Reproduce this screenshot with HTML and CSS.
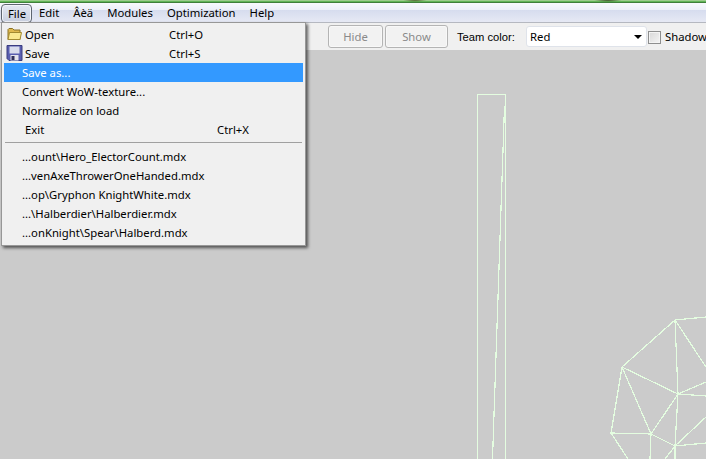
FILE: index.html
```html
<!DOCTYPE html>
<html lang="en">
<head>
<meta charset="utf-8">
<title>Model Editor</title>
<link rel="stylesheet" href="styles.css">
</head>
<body>
<div class="app">
  <div class="title-strip"></div>
  <nav class="menubar">
    <span class="menu-top active">File</span>
    <span class="menu-top">Edit</span>
    <span class="menu-top">Âèä</span>
    <span class="menu-top">Modules</span>
    <span class="menu-top">Optimization</span>
    <span class="menu-top">Help</span>
  </nav>
  <div class="toolbar">
    <button class="btn btn-hide" disabled>Hide</button>
    <button class="btn btn-show" disabled>Show</button>
    <span class="team-label">Team color:</span>
    <div class="select"><span>Red</span><i class="arrow"></i></div>
    <span class="check"></span>
    <span class="shadows">Shadows</span>
  </div>
  <main class="canvas">
    <svg class="mesh" width="706" height="409" viewBox="0 50 706 409" fill="none" stroke="#e4fde0" stroke-width="1.2" shape-rendering="crispEdges">
      <path d="M477.5 459V94.500H505.500V459"/>
      <path d="M504.500 106L492.500 459"/>
      <path d="M675 320L622 367L678 394L675 320M622 367L611 433L651 434L622 367M651 434L678 394L675 446L651 434"/>
      <path d="M611 433L628 459M651 434L650 459M675 446L665 459M675 446L675 459M675 446L706 443M675 446L706 417M678 394L706 396M678 394L706 382M675 320L706 317M675 320L706 367"/>
    </svg>
  </main>
  <div class="dropdown">
    <div class="item"><svg class="icon" viewBox="0 0 16 16"><path d="M1.500 13.500V3.500L2.500 2.500H6L7.500 4H13.500V13.500Z" fill="#e0b94e" stroke="#8a7326"/><path d="M1.500 13.500L3 6.500H15L13.500 13.500Z" fill="#fbe98f" stroke="#a38a30"/></svg><span class="label">Open</span><span class="key">Ctrl+O</span></div>
    <div class="item"><svg class="icon" viewBox="0 0 16 16"><path d="M0.500 0.500H15.500V15.500H2.500L0.500 13.500Z" fill="#5a5fb0" stroke="#3a3d80"/><rect x="3" y="1.500" width="10" height="7" fill="#d8dcec"/><rect x="4" y="10" width="8" height="5.500" fill="#e4e4ec"/><rect x="5" y="11" width="3" height="4" fill="#30305a"/></svg><span class="label">Save</span><span class="key">Ctrl+S</span></div>
    <div class="item plain selected"><span>Save as...</span></div>
    <div class="item plain"><span>Convert WoW-texture...</span></div>
    <div class="item plain"><span>Normalize on load</span></div>
    <div class="item exit"><span class="label">Exit</span><span class="key">Ctrl+X</span></div>
    <div class="sep"></div>
    <div class="item plain"><span>...ount\Hero_ElectorCount.mdx</span></div>
    <div class="item plain"><span>...venAxeThrowerOneHanded.mdx</span></div>
    <div class="item plain"><span>...op\Gryphon KnightWhite.mdx</span></div>
    <div class="item plain"><span>...\Halberdier\Halberdier.mdx</span></div>
    <div class="item plain"><span>...onKnight\Spear\Halberd.mdx</span></div>
  </div>
</div>
</body>
</html>
```
FILE: styles.css
```css
* { box-sizing: border-box; }
html, body { margin: 0; padding: 0; }
body {
  font-family: "Noto Sans", "Liberation Sans", sans-serif;
  font-size: 11.3px;
  color: #000;
}
.app {
  position: relative;
  width: 706px;
  height: 459px;
  overflow: hidden;
  display: flex;
  flex-direction: column;
  background: #f0f0f0;
}
.title-strip {
  height: 3px;
  flex: none;
  background:
    radial-gradient(ellipse 12px 2px at 415px 0, #4a5a2a 0, transparent 100%),
    radial-gradient(ellipse 14px 2px at 608px 0, #33451f 0, transparent 100%),
    linear-gradient(#9ccb8c 0, #9ccb8c 1px, #62b558 1px, #62b558 2px, #3f7f3a 2px, #3f7f3a 3px);
}
.menubar {
  height: 20px;
  flex: none;
  display: flex;
  align-items: flex-start;
  padding: 1px 0 0 1px;
  background: linear-gradient(#f8f9fd 0, #eceff8 7px, #d6dcee 7px, #e6e9f4 19px);
  border-bottom: 1px solid #b5b8c0;
}
.menu-top { margin-left: 7px; margin-right: 7px; line-height: 18px; }
.menu-top.active {
  width: 31px;
  height: 19px;
  margin: 0;
  padding: 0 0 0 6px;
  line-height: 17px;
  border: 1px solid #5e6570;
  border-radius: 4px;
  background: linear-gradient(#e3e7f2, #c8cfdf);
  box-shadow: inset 0 0 0 1px #f2f4fa;
}
.toolbar {
  height: 27px;
  flex: none;
  display: flex;
  align-items: center;
  background: #f0f0f0;
  padding-left: 328px;
}
.toolbar > * { flex: none; }
.btn {
  height: 23px;
  margin: 0;
  padding: 0;
  font: inherit;
  color: #8a8a8a;
  background: #f2f2f2;
  border: 1px solid #b4b4b4;
  border-radius: 3px;
  box-shadow: inset 0 0 0 1px #f8f8f8;
}
.btn-hide { width: 55px; margin-right: 2px; }
.btn-show { width: 63px; }
.team-label {
  margin-left: 9px;
  width: 69px;
  font-family: "Liberation Sans", sans-serif;
  font-size: 11.2px;
}
.select {
  width: 121px;
  height: 21px;
  margin-right: 1px;
  padding: 0 0 0 3px;
  display: flex;
  align-items: center;
  justify-content: space-between;
  background: #fff;
  border: 1px solid #dfe3ea;
  border-radius: 3px;
}
.arrow {
  width: 0;
  height: 0;
  margin-right: 4px;
  border: 4px solid transparent;
  border-top: 4px solid #000;
  border-bottom: 0;
}
.check {
  width: 13px;
  height: 13px;
  margin: 1px 4px 0 0;
  border: 1px solid #8e8f8f;
  background: linear-gradient(135deg, #d8d8d8, #f4f4f4);
  box-shadow: inset 0 0 0 1px #f4f4f4;
}
.shadows { white-space: nowrap; }
.canvas { flex: 1; background: #cbcbcb; }
.mesh { display: block; }
.dropdown {
  position: absolute;
  left: 1px;
  top: 22px;
  width: 305px;
  height: 224px;
  padding: 2px;
  background: #f0f0f0;
  border: 1px solid #979797;
  box-shadow: 2px 2px 3px rgba(0, 0, 0, .6);
}
.item {
  height: 19px;
  display: flex;
  align-items: center;
  white-space: nowrap;
  padding-bottom: 1px;
}
.item .icon { width: 17px; height: 16px; margin-left: 2px; margin-right: 2px; flex: none; }
.item .label { width: 144px; }
.item.plain { padding-left: 18px; }
.item.selected { background: #3399ff; color: #fff; }
.item.exit { height: 20px; padding-left: 21px; }
.item.exit .label { width: 192px; }
.sep { height: 1px; margin: 2px 1px 4px; background: #a0a0a0; }
```
